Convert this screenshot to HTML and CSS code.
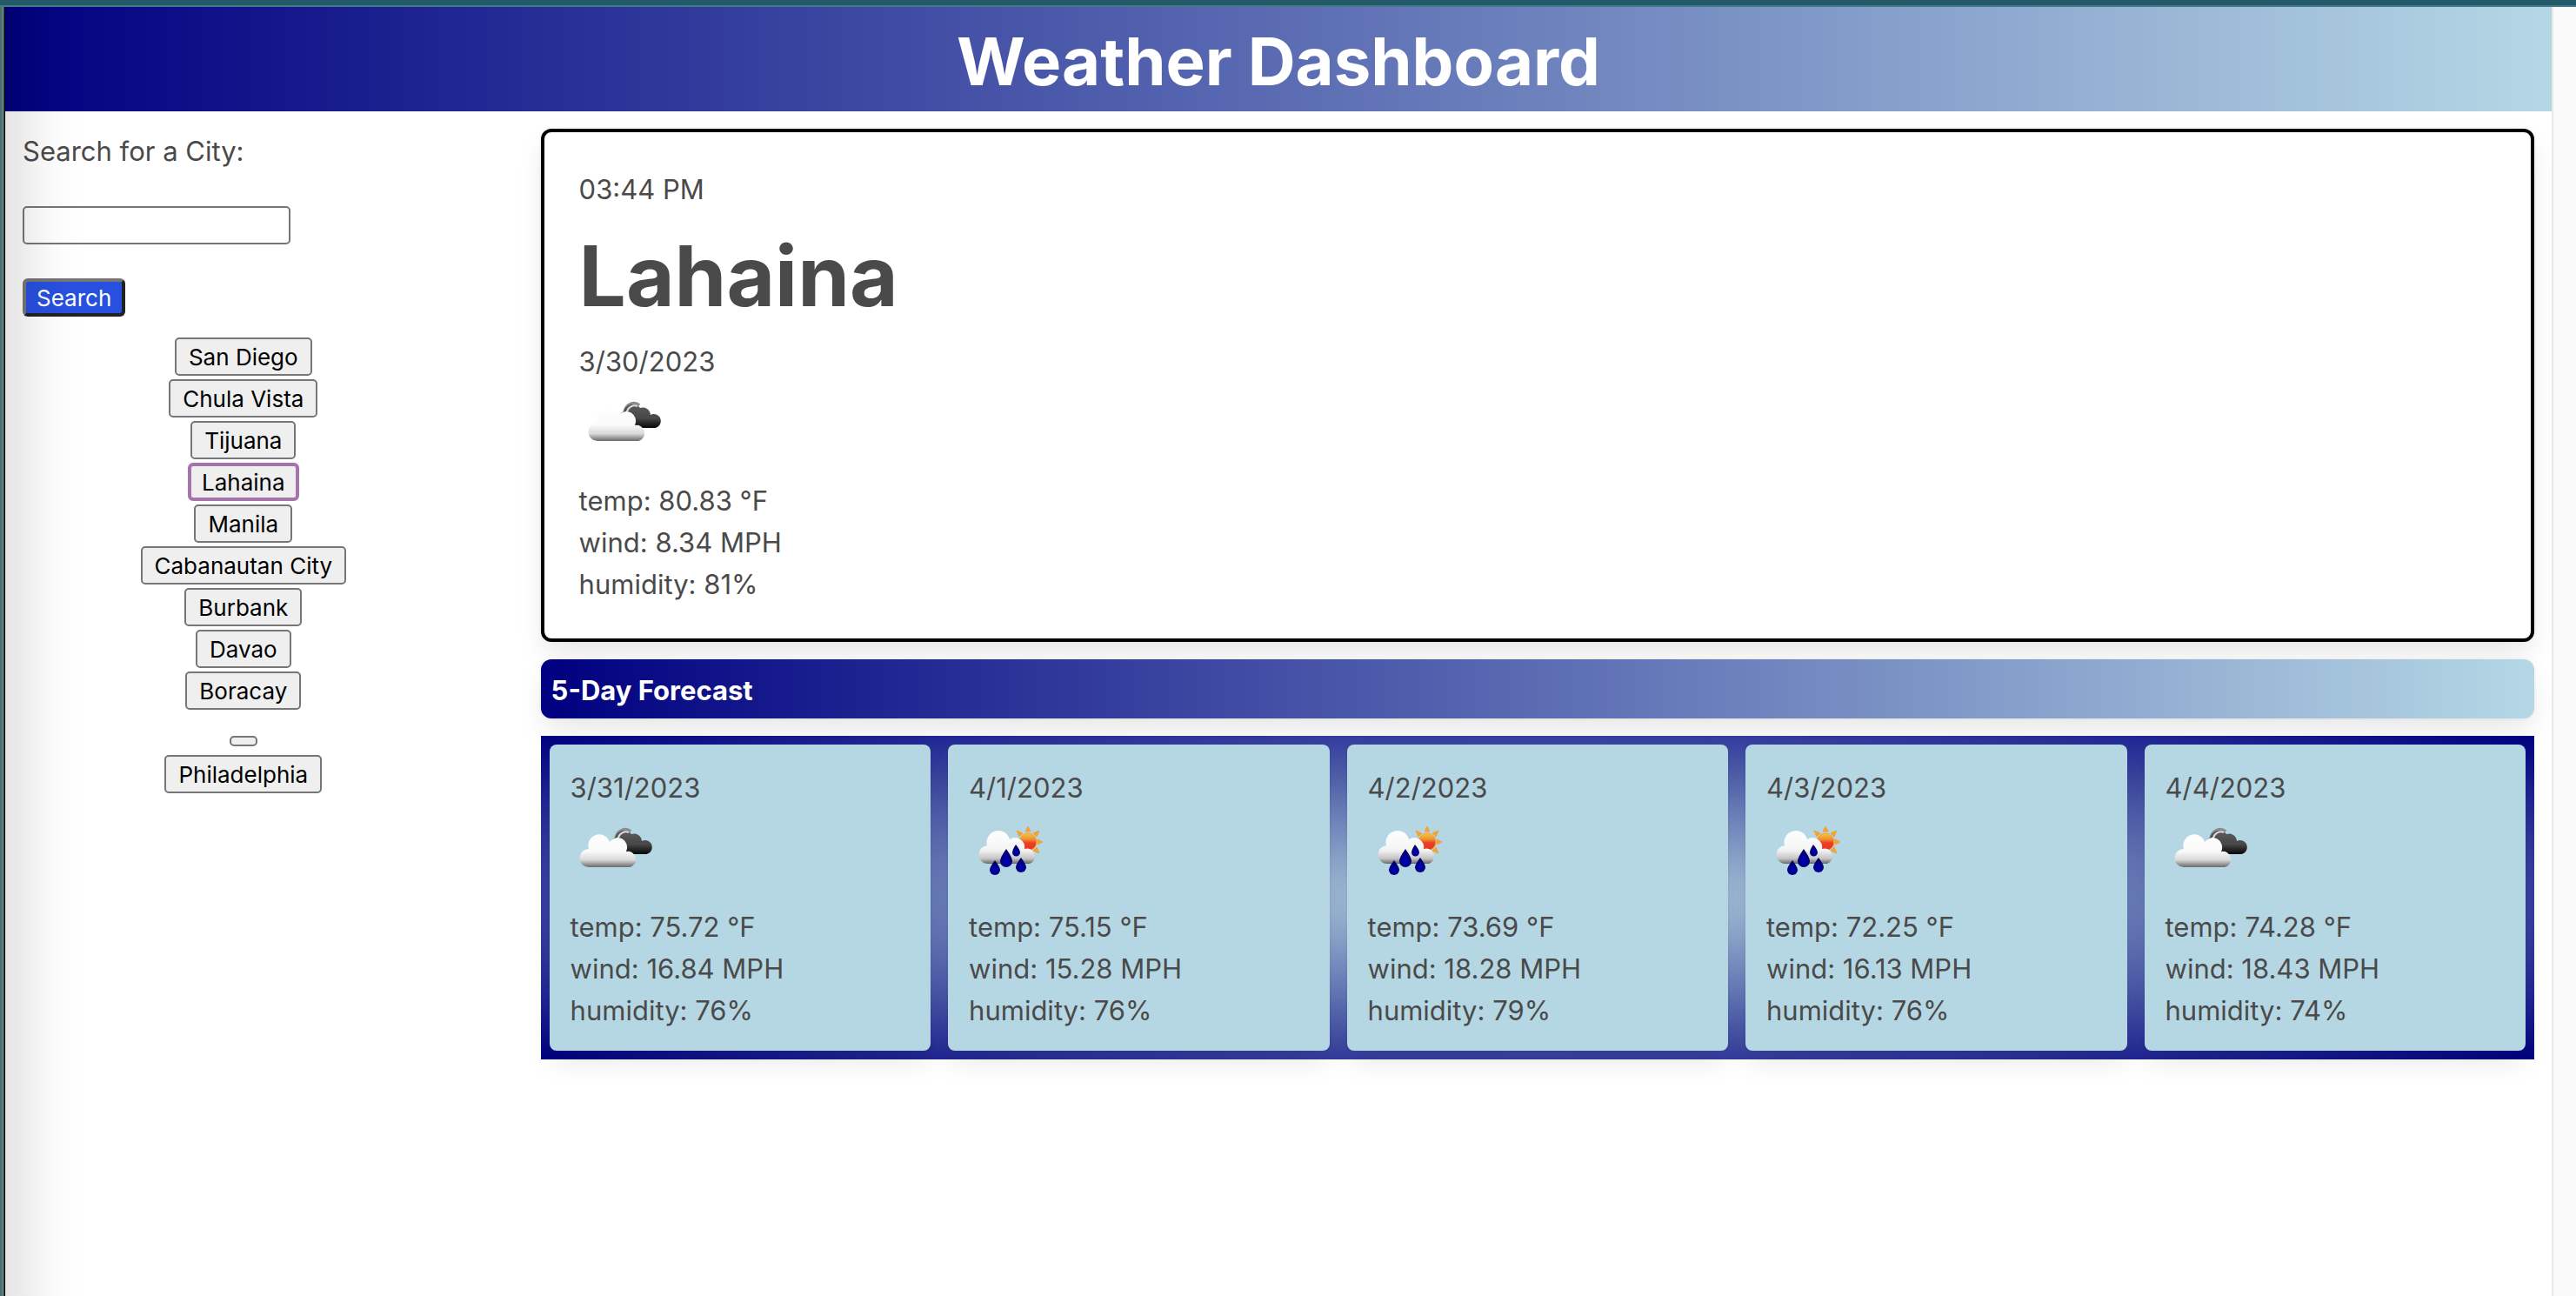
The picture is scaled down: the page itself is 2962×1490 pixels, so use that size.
FILE: index.html
```html
<!DOCTYPE html>
<html lang="en">
<head>
<meta charset="utf-8">
<title>Weather Dashboard</title>
<link rel="stylesheet" href="styles.css">
</head>
<body>
<svg class="sprite" aria-hidden="true">
  <defs>
    <linearGradient id="white-fill" gradientUnits="userSpaceOnUse" x1="0" y1="26" x2="0" y2="67">
      <stop offset="0" stop-color="#fff"/>
      <stop offset=".55" stop-color="#fafafa"/>
      <stop offset=".8" stop-color="#d8d8d8"/>
      <stop offset=".88" stop-color="#aaa"/>
      <stop offset="1" stop-color="#6a6a6a"/>
    </linearGradient>
    <linearGradient id="rain-fill" gradientUnits="userSpaceOnUse" x1="0" y1="24" x2="0" y2="63">
      <stop offset="0" stop-color="#fff"/>
      <stop offset=".6" stop-color="#f4f4f4"/>
      <stop offset=".85" stop-color="#c4c4c4"/>
      <stop offset="1" stop-color="#666"/>
    </linearGradient>
    <linearGradient id="dark-fill" gradientUnits="userSpaceOnUse" x1="0" y1="24" x2="0" y2="52">
      <stop offset="0" stop-color="#5c5c5c"/>
      <stop offset=".6" stop-color="#484848"/>
      <stop offset="1" stop-color="#050505"/>
    </linearGradient>
    <linearGradient id="sun-fill" x1="0" y1="0" x2="0" y2="1">
      <stop offset="0" stop-color="#f6c743"/>
      <stop offset=".35" stop-color="#f0902f"/>
      <stop offset=".55" stop-color="#ec4026"/>
      <stop offset="1" stop-color="#e8321f"/>
    </linearGradient>
    <radialGradient id="drop-fill" cx=".5" cy=".65" r=".55">
      <stop offset="0" stop-color="#0000c4"/>
      <stop offset="1" stop-color="#00005e"/>
    </radialGradient>
    <filter id="soft" x="-10%" y="-10%" width="120%" height="120%"><feGaussianBlur stdDeviation=".7"/></filter>
  </defs>
  <symbol id="clouds" viewBox="0 0 100 100">
    <g filter="url(#soft)">
      <path d="M48 37 Q52 36 53 32 A10 10 0 0 1 69 26" fill="none" stroke="#8c8c8c" stroke-width="4"/>
      <path d="M53 42 A10 10 0 0 1 70 29 A9 9 0 0 1 82 37 A8 8 0 1 1 85 52 H60 Z" fill="url(#dark-fill)"/>
      <path d="M51 40 Q54 37 55 33 A9 9 0 0 1 67 27" fill="none" stroke="#ddd" stroke-width="2"/>
      <path d="M21 67 A10.5 10.5 0 0 1 21 46 A12.5 12.5 0 0 1 45 38 A11 11 0 0 1 64 49 A9 9 0 1 1 68 67 Z" fill="url(#white-fill)"/>
    </g>
  </symbol>
  <symbol id="showers" viewBox="0 0 100 100">
    <g filter="url(#soft)">
      <path d="M68 20 L71 26 H65Z M81 25 L78 32 L74 28Z M85 38 L79 41 V35Z M81 51 L74 48 L78 44Z M55 25 L62 28 L58 32Z" fill="#f2a23a" stroke="#f2a23a"/>
      <circle cx="68" cy="38" r="10" fill="url(#sun-fill)" stroke="#f2a23a"/>
      <path d="M23 63 A10.5 10.5 0 0 1 21 42 A13 13 0 0 1 47 35 A11 11 0 0 1 64 46 A9 9 0 1 1 70 63 Z" fill="url(#rain-fill)"/>
      <path d="M43 46 Q36 56 36 60 A7 7 0 0 0 50 60 Q50 56 43 46Z" fill="url(#drop-fill)"/>
      <path d="M54 41 Q50 47 50 50 A4 4 0 0 0 59 50 Q59 47 54 41Z" fill="url(#drop-fill)"/>
      <path d="M30 59 Q24 67 24 70 A5 5 0 0 0 36 70 Q36 67 30 59Z" fill="url(#drop-fill)"/>
      <path d="M60 56 Q54 64 54 67 A5 5 0 0 0 66 67 Q66 64 60 56Z" fill="url(#drop-fill)"/>
    </g>
  </symbol>
</svg>

<div class="window">
  <div class="page">
    <header class="banner"><h1 class="banner-title">Weather Dashboard</h1></header>
    <div class="columns">
      <aside class="sidebar">
        <form class="search">
          <label class="search-label" for="city">Search for a City:</label>
          <input class="search-input" id="city" type="text">
          <button class="search-button" type="button">Search</button>
        </form>
        <ul class="history">
          <li class="history-row"><button class="city" type="button">San Diego</button></li>
          <li class="history-row"><button class="city" type="button">Chula Vista</button></li>
          <li class="history-row"><button class="city" type="button">Tijuana</button></li>
          <li class="history-row"><button class="city city-active" type="button">Lahaina</button></li>
          <li class="history-row"><button class="city" type="button">Manila</button></li>
          <li class="history-row"><button class="city" type="button">Cabanautan City</button></li>
          <li class="history-row"><button class="city" type="button">Burbank</button></li>
          <li class="history-row"><button class="city" type="button">Davao</button></li>
          <li class="history-row"><button class="city" type="button">Boracay</button></li>
          <li class="history-row"><button class="city city-empty" type="button"></button></li>
          <li class="history-row"><button class="city" type="button">Philadelphia</button></li>
        </ul>
      </aside>
      <main class="main">
        <section class="current">
          <p>03:44 PM</p>
          <h2 class="current-city">Lahaina</h2>
          <p>3/30/2023</p>
          <svg class="icon"><use href="#clouds"/></svg>
          <p>temp: 80.83 °F</p>
          <p>wind: 8.34 MPH</p>
          <p>humidity: 81%</p>
        </section>
        <h3 class="forecast-title">5-Day Forecast</h3>
        <section class="forecast">
          <article class="day">
            <p>3/31/2023</p>
            <svg class="icon"><use href="#clouds"/></svg>
            <p>temp: 75.72 °F</p><p>wind: 16.84 MPH</p><p>humidity: 76%</p>
          </article>
          <article class="day">
            <p>4/1/2023</p>
            <svg class="icon"><use href="#showers"/></svg>
            <p>temp: 75.15 °F</p><p>wind: 15.28 MPH</p><p>humidity: 76%</p>
          </article>
          <article class="day">
            <p>4/2/2023</p>
            <svg class="icon"><use href="#showers"/></svg>
            <p>temp: 73.69 °F</p><p>wind: 18.28 MPH</p><p>humidity: 79%</p>
          </article>
          <article class="day">
            <p>4/3/2023</p>
            <svg class="icon"><use href="#showers"/></svg>
            <p>temp: 72.25 °F</p><p>wind: 16.13 MPH</p><p>humidity: 76%</p>
          </article>
          <article class="day">
            <p>4/4/2023</p>
            <svg class="icon"><use href="#clouds"/></svg>
            <p>temp: 74.28 °F</p><p>wind: 18.43 MPH</p><p>humidity: 74%</p>
          </article>
        </section>
      </main>
    </div>
  </div>
</div>
</body>
</html>
```
FILE: styles.css
```css
* { box-sizing: border-box; }

body, h1, h2, h3, p, ul { margin: 0; padding: 0; }

body {
  color: #4a4a4a;
  font-family: Inter, "Liberation Sans", sans-serif;
  font-size: 31px;
  line-height: 48px;
}

.sprite { position: absolute; width: 0; height: 0; }

/* Window frame around the page */
.window {
  display: flex;
  flex-direction: column;
  min-height: 100vh;
  padding-right: 26px;
  background: #fafafa;
  border-top: 6px solid #255a6a;
}

.window::before {
  content: "";
  height: 2px;
  margin-right: -26px;
  background: #3e7a88;
}

.page {
  position: relative;
  flex: 1;
  background: #fff;
  border-right: 2px solid #e8e8e8;
  padding-left: 6px;
}

.page::before {
  content: "";
  position: absolute;
  inset: 0 auto 0 0;
  width: 6px;
  background: linear-gradient(to right, #4d6f72 0 2px, #5c7f80 2px 4px, #3a5054 4px 5px, #000 5px);
}

/* Shade cast on the page's left edge */
.page::after {
  content: "";
  position: absolute;
  inset: 0 auto 0 6px;
  width: 90px;
  background: linear-gradient(to right, rgba(0,0,0,.1), rgba(0,0,0,.08) 20%, rgba(0,0,0,.03) 50%, rgba(0,0,0,.01) 75%, transparent);
  pointer-events: none;
}

.banner {
  padding: 14px 12px 10px;
  background: linear-gradient(to right, navy, #b5d7e5);
  text-align: center;
}

.banner-title {
  color: #fff;
  font-size: 76px;
  font-weight: 700;
  line-height: 96px;
}

.columns { display: grid; grid-template-columns: 1fr 4fr; }

.sidebar { padding: 22px 58px 20px 20px; }

.search {
  display: flex;
  flex-direction: column;
  align-items: flex-start;
  gap: 39px;
}

.search-input {
  width: 308px;
  height: 44px;
  background: #fff;
  border: 2px solid #767676;
  border-radius: 5px;
  font: inherit;
}

.search-button, .city {
  height: 44px;
  font-family: inherit;
  font-size: 26px;
  line-height: 32px;
}

.search-button {
  padding: 2px 12px 0;
  background: #2850e0;
  border: 4px solid;
  border-color: #767676 #212121 #212121 #767676;
  border-radius: 6px;
  color: #fff;
}

.history { padding-top: 22px; list-style: none; }

.history-row {
  display: flex;
  align-items: center;
  justify-content: center;
  height: 48px;
}

.city {
  padding: 2px 14px 0;
  background: #efefef;
  border: 2px solid #767676;
  border-radius: 5px;
  color: #000;
}

.city-active {
  padding: 2px 12px 0;
  border: 4px solid #a574aa;
  border-radius: 6px;
}

.city-empty { align-self: flex-end; height: 12px; margin-bottom: 8px; }

.main {
  display: flex;
  flex-direction: column;
  gap: 20px;
  min-width: 0;
  padding: 20px 20px 20px 30px;
}

.current, .forecast-title, .day {
  border-radius: 12px;
  box-shadow: 0 16px 32px -4px rgba(10,10,10,.1), 0 0 0 2px rgba(10,10,10,.02);
}

.current {
  padding: 42px 40px 38px;
  background: #fff;
  border: 4px solid #000;
}

.current-city {
  margin: 26px 0;
  font-size: 96px;
  font-weight: 700;
  line-height: 98px;
}

.icon { display: block; width: 100px; height: 100px; margin-bottom: 12px; }

.forecast-title {
  padding: 12px 12px 8px;
  background: linear-gradient(to right, navy, #b5d7e5);
  color: #fff;
  font-size: 31px;
  font-weight: 700;
}

.forecast {
  display: grid;
  grid-template-columns: repeat(5, 1fr);
  gap: 20px;
  padding: 10px;
  background: radial-gradient(#b5d7e5, navy);
}

.day { padding: 26px 24px 22px; background: #b5d7e3; border-radius: 8px; }
```
